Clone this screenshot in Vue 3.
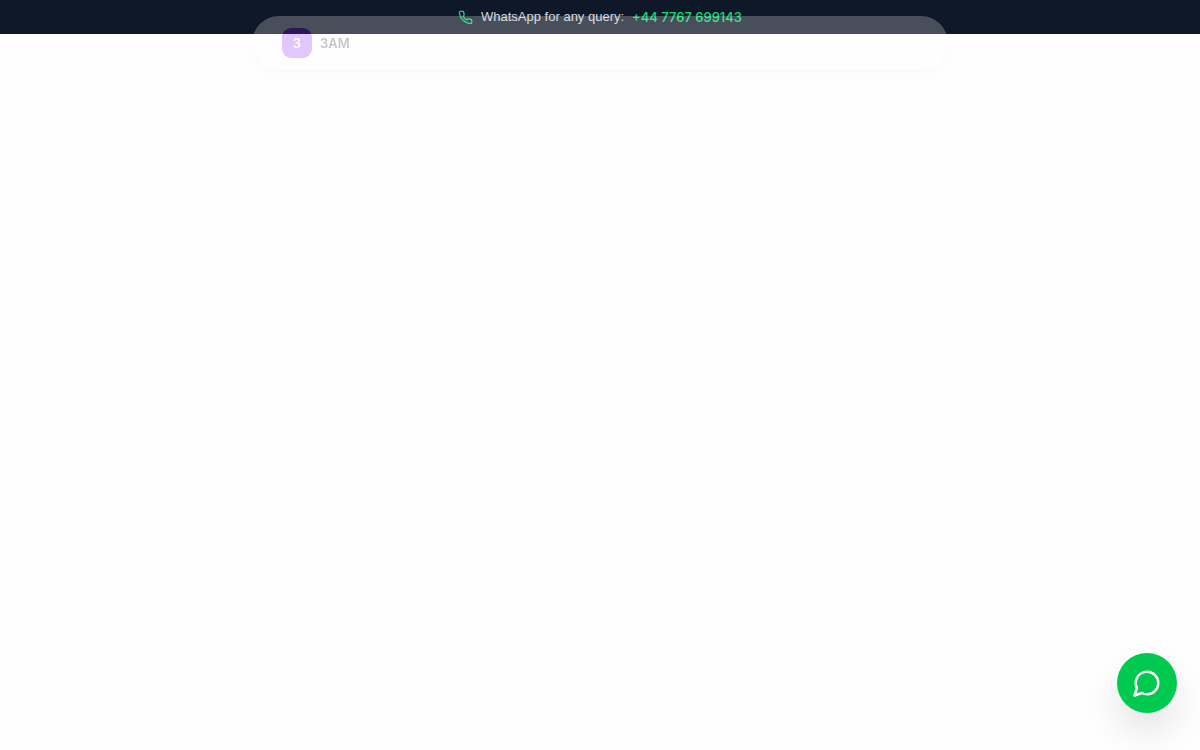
<script setup>
const phone = '+44 7767 699143'
</script>

<template>
  <div class="page">
    <header class="topbar">
      <svg class="phone" viewBox="0 0 24 24" aria-hidden="true">
        <path d="M22 16.92v3a2 2 0 0 1-2.18 2 19.79 19.79 0 0 1-8.63-3.07 19.5 19.5 0 0 1-6-6 19.79 19.79 0 0 1-3.07-8.67A2 2 0 0 1 4.11 2h3a2 2 0 0 1 2 1.72 12.84 12.84 0 0 0 .7 2.81 2 2 0 0 1-.45 2.11L8.09 9.91a16 16 0 0 0 6 6l1.27-1.27a2 2 0 0 1 2.11-.45 12.84 12.84 0 0 0 2.81.7A2 2 0 0 1 22 16.92z" />
      </svg>
      <span class="label">WhatsApp for any query:</span>
      <a class="number" href="https://wa.me/447767699143">{{ phone }}</a>
    </header>
    <nav class="nav">
      <a class="brand" href="#">
        <span class="badge">3</span>
        <span>3AM</span>
      </a>
    </nav>
    <button class="chat" type="button" aria-label="Chat on WhatsApp">
      <svg viewBox="0 0 24 24" aria-hidden="true">
        <path d="M7.9 20A9 9 0 1 0 4 16.1L2 22Z" />
      </svg>
    </button>
  </div>
</template>

<style>
body {
  margin: 0;
  background: #fefefe;
}
</style>

<style scoped>
.page {
  min-height: 100vh;
  font-family: Inter, "Liberation Sans", sans-serif;
}
.topbar {
  display: flex;
  align-items: center;
  justify-content: center;
  gap: 8px;
  height: 34px;
  background: #0f1828;
  color: #d1d5dc;
  font-size: 13px;
  line-height: 20px;
}
.label {
  font-family: "Liberation Sans", Arial, sans-serif;
}
.phone {
  width: 15px;
  height: 15px;
  fill: none;
  stroke: #05df72;
  stroke-width: 2;
  stroke-linecap: round;
  stroke-linejoin: round;
}
.number {
  color: #05df72;
  font-weight: 500;
  text-decoration: none;
}
.nav {
  position: fixed;
  top: 16px;
  left: 0;
  right: 0;
  box-sizing: border-box;
  width: 58%;
  margin: 0 auto;
  padding: 12px 30px;
  border-radius: 28px;
  background: #fff;
  box-shadow: 0 8px 16px rgba(0, 0, 0, 0.07);
  opacity: 0.24;
}
.brand {
  display: inline-flex;
  vertical-align: top;
  align-items: center;
  gap: 8px;
  color: #111;
  font-size: 13px;
  font-weight: 600;
  text-decoration: none;
}
.badge {
  display: grid;
  place-items: center;
  width: 30px;
  height: 30px;
  border-radius: 9px;
  background: #861cfc;
  color: #fff;
}
.chat {
  position: fixed;
  right: 23px;
  bottom: 37px;
  display: grid;
  place-items: center;
  width: 60px;
  height: 60px;
  padding: 0;
  border: 0;
  border-radius: 50%;
  background: #00c950;
  box-shadow: 0 20px 36px rgba(0, 0, 0, 0.1);
  cursor: pointer;
}
.chat svg {
  width: 30px;
  height: 30px;
  fill: none;
  stroke: #fff;
  stroke-width: 2;
  stroke-linecap: round;
  stroke-linejoin: round;
}
</style>
